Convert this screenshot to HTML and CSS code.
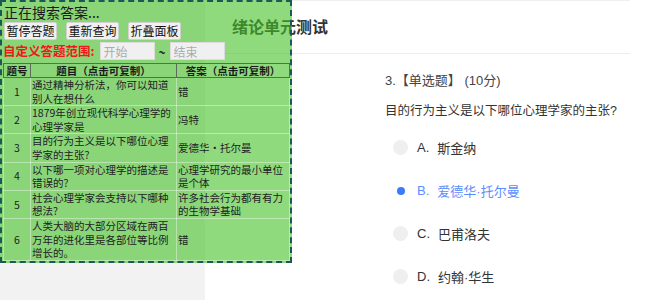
FILE: index.html
```html
<!DOCTYPE html>
<html lang="zh-CN">
<head>
<meta charset="utf-8">
<title>绪论单元测试</title>
<link rel="stylesheet" href="styles.css">
</head>
<body>
<div class="page">
  <aside class="sidebar"></aside>
  <main class="main">
    <header class="head"><h1 class="title">绪论单元测试</h1></header>
    <section class="question">
      <div class="q-meta">3.【单选题】 (10分)</div>
      <div class="q-text">目的行为主义是以下哪位心理学家的主张?</div>
      <ul class="options">
        <li class="opt"><span class="radio"></span><span class="letter">A.</span><span>斯金纳</span></li>
        <li class="opt opt-checked"><span class="radio radio-checked"><span class="dot"></span></span><span class="letter">B.</span><span>爱德华·托尔曼</span></li>
        <li class="opt"><span class="radio"></span><span class="letter">C.</span><span>巴甫洛夫</span></li>
        <li class="opt"><span class="radio"></span><span class="letter">D.</span><span>约翰·华生</span></li>
      </ul>
    </section>
  </main>
</div>

<div class="helper">
  <div class="status">正在搜索答案...</div>
  <div class="actions">
    <button class="btn">暂停答题</button>
    <button class="btn">重新查询</button>
    <button class="btn">折叠面板</button>
  </div>
  <div class="range">
    <span class="range-label">自定义答题范围:</span>
    <input class="range-input" placeholder="开始">
    <span class="tilde">~</span>
    <input class="range-input" placeholder="结束">
  </div>
  <table class="answers">
    <colgroup><col class="c-num"><col class="c-q"><col class="c-a"></colgroup>
    <thead>
      <tr><th>题号</th><th>题目（点击可复制）</th><th>答案（点击可复制）</th></tr>
    </thead>
    <tbody>
      <tr><td class="num">1</td><td>通过精神分析法，你可以知道别人在想什么</td><td>错</td></tr>
      <tr><td class="num">2</td><td>1879年创立现代科学心理学的心理学家是</td><td>冯特</td></tr>
      <tr><td class="num">3</td><td>目的行为主义是以下哪位心理学家的主张?</td><td>爱德华·托尔曼</td></tr>
      <tr><td class="num">4</td><td>以下哪一项对心理学的描述是错误的?</td><td>心理学研究的最小单位是个体</td></tr>
      <tr><td class="num">5</td><td>社会心理学家会支持以下哪种想法?</td><td>许多社会行为都有有力的生物学基础</td></tr>
      <tr><td class="num">6</td><td>人类大脑的大部分区域在两百万年的进化里是各部位等比例增长的。</td><td>错</td></tr>
    </tbody>
  </table>
</div>
</body>
</html>
```

FILE: styles.css
```css
html, body {
  margin: 0;
  padding: 0;
}
body {
  font-family: "Liberation Sans", "Noto Sans CJK SC", sans-serif;
  background: #ffffff;
  color: #333333;
}

.page {
  display: flex;
  height: 300px;
}
.sidebar {
  flex: none;
  width: 205px;
  background: #f2f2f2;
}
.main {
  flex: none;
  width: 425px;
}
.head {
  box-sizing: border-box;
  height: 54px;
  border-top: 1px solid #f0f0f0;
  border-bottom: 1px solid #ececec;
  display: flex;
  align-items: center;
  padding: 2px 0 0 27px;
}
.title {
  margin: 0;
  font-size: 16px;
  line-height: 20px;
  font-weight: bold;
  color: #333333;
}
.question {
  padding-left: 180px;
}
.q-meta {
  margin-top: 17px;
  font-size: 13px;
  line-height: 20px;
  color: #444444;
}
.q-text {
  margin-top: 10px;
  font-size: 12.5px;
  line-height: 20px;
  color: #333333;
}
.options {
  list-style: none;
  margin: 5px 0 0;
  padding: 0 0 0 8px;
}
.opt {
  display: flex;
  align-items: center;
  height: 43px;
  font-size: 13px;
  color: #333333;
}
.radio {
  flex: none;
  width: 15px;
  height: 15px;
  border-radius: 50%;
  background: #efefef;
  margin-right: 9px;
  display: flex;
  align-items: center;
  justify-content: center;
}
.radio-checked {
  background: #ffffff;
}
.dot {
  width: 8px;
  height: 8px;
  border-radius: 50%;
  background: #3b7bff;
}
.letter {
  margin-right: 8px;
}
.opt-checked {
  color: #5b8dff;
}

/* helper panel overlay */
.helper {
  position: absolute;
  left: 0;
  top: 0;
  width: 288px;
  border: 2px dashed #1d5858;
  background: rgba(70, 193, 40, 0.6);
  padding: 0;
  font-family: "Noto Sans CJK SC", sans-serif;
  color: #222222;
}
.status {
  height: 20px;
  padding: 1px 0 0 2px;
  box-sizing: border-box;
  font-size: 14px;
  line-height: 19px;
  color: #1a1a1a;
}
.actions {
  display: flex;
  gap: 9px;
  padding-left: 2px;
  height: 18px;
}
.btn {
  height: 18px;
  padding: 0 1.5px;
  margin: 0;
  border: 1px solid #d2d2d2;
  border-radius: 2px;
  background: #f0f0f0;
  font-family: "Noto Sans CJK SC", sans-serif;
  font-size: 12px;
  line-height: 16px;
  color: #111111;
}
.range {
  display: flex;
  align-items: center;
  height: 18px;
  margin-top: 2px;
  padding-left: 1px;
}
.range-label {
  color: #f01818;
  font-weight: bold;
  font-size: 12.5px;
  line-height: 18px;
  margin-right: 5px;
}
.range-input {
  box-sizing: border-box;
  width: 55px;
  height: 18px;
  margin: 0;
  padding: 0 3px;
  border: 1px solid #dcdcdc;
  background: #f0f0f0;
  font-family: "Noto Sans CJK SC", sans-serif;
  font-size: 12px;
}
.range-input::placeholder {
  color: #ababab;
}
.tilde {
  width: 15px;
  text-align: center;
  font-weight: bold;
  font-size: 12px;
  color: #222222;
}
.answers {
  margin: 3px 0 0 1px;
  width: 286px;
  border-collapse: collapse;
  table-layout: fixed;
  font-size: 10.5px;
  line-height: 13.6px;
}
.c-num { width: 27px; }
.c-q { width: 146px; }
.c-a { width: 113px; }
.answers th {
  border: 1px solid #5c6b5c;
  padding: 0;
  height: 13px;
  line-height: 13px;
  font-weight: bold;
  text-align: center;
  color: #1a1a1a;
}
.answers td {
  border: 1px solid rgba(255, 255, 255, 0.4);
  padding: 0 1px;
  vertical-align: middle;
  color: #222222;
}
.answers td.num {
  text-align: center;
}
```
